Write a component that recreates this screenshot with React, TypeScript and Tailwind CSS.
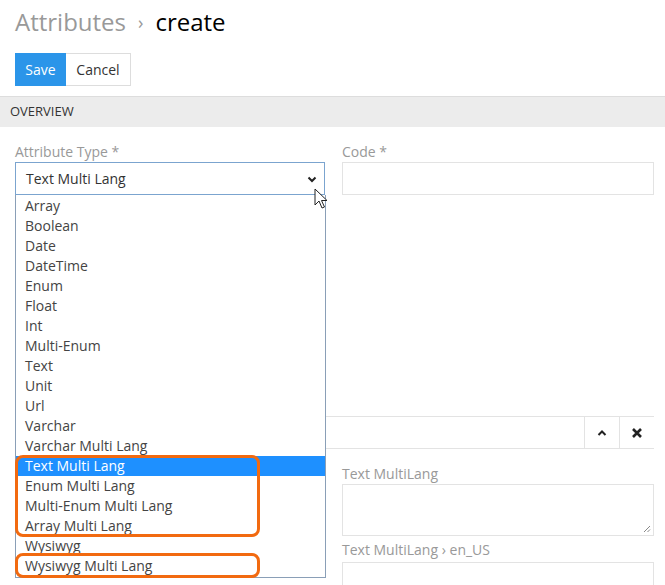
import React from "react";

const options = [
  "Array",
  "Boolean",
  "Date",
  "DateTime",
  "Enum",
  "Float",
  "Int",
  "Multi-Enum",
  "Text",
  "Unit",
  "Url",
  "Varchar",
  "Varchar Multi Lang",
  "Text Multi Lang",
  "Enum Multi Lang",
  "Multi-Enum Multi Lang",
  "Array Multi Lang",
  "Wysiwyg",
  "Wysiwyg Multi Lang",
];

const selected = "Text Multi Lang";

function Label({ children }: { children: React.ReactNode }) {
  return <div className="h-[20px] text-[14px] leading-[20px] text-[#999]">{children}</div>;
}

export default function App() {
  return (
    <div className="relative h-[585px] w-[665px] overflow-hidden bg-white font-['Open_Sans',sans-serif] text-[#333]">
      {/* Header */}
      <div className="flex h-[44px] items-center px-[15px] text-[24px] leading-none">
        <span className="text-[#999]">Attributes</span>
        <span className="mx-[12px] text-[18px] text-[#999]">›</span>
        <span className="text-black">create</span>
      </div>
      <div className="flex px-[15px] pt-[9px]">
        <button className="h-[33px] w-[51px] bg-[#2b95e9] text-[14px] text-white">Save</button>
        <button className="h-[33px] w-[65px] border border-l-0 border-[#ddd] bg-white text-[14px] text-[#333]">
          Cancel
        </button>
      </div>

      {/* Overview panel */}
      <div className="mt-[10px] flex h-[31px] items-center border-t border-[#ddd] bg-[#ececec] px-[10px] text-[13px] text-[#333]">
        OVERVIEW
      </div>

      <div className="grid grid-cols-[310px_312px] gap-x-[17px] px-[15px] pt-[15px]">
        <div>
          <Label>Attribute Type *</Label>
          <div className="flex h-[33px] items-center justify-between border border-[#7ba4cf] pl-[10px] pr-[6px] text-[14px]">
            <span>Text Multi Lang</span>
            <svg width="10" height="8" viewBox="0 0 10 8" className="mr-[1px]">
              <path d="M1.5 2.5 L5 6 L8.5 2.5" fill="none" stroke="#222" strokeWidth="2" />
            </svg>
          </div>
        </div>
        <div>
          <Label>Code *</Label>
          <div className="h-[33px] border border-[#e3e3e3]" />
        </div>
      </div>

      {/* Section panel with controls */}
      <div className="ml-[15px] mr-[11px] mt-[221px] flex h-[33px] items-stretch justify-end border-y border-[#e3e3e3]">
        <button className="flex w-[35px] items-center justify-center border-l border-[#e3e3e3]">
          <svg width="10" height="8" viewBox="0 0 10 8">
            <path d="M1.5 6 L5 2.5 L8.5 6" fill="none" stroke="#222" strokeWidth="2" />
          </svg>
        </button>
        <button className="flex w-[35px] items-center justify-center border-l border-[#e3e3e3]">
          <svg width="12" height="12" viewBox="0 0 12 12">
            <path d="M2 2 L10 10 M10 2 L2 10" fill="none" stroke="#222" strokeWidth="2.6" />
          </svg>
        </button>
      </div>

      <div className="ml-[342px] w-[312px] pt-[15px]">
        <Label>Text MultiLang</Label>
        <div className="relative h-[52px] border border-[#e3e3e3]">
          <svg width="8" height="8" viewBox="0 0 8 8" className="absolute bottom-[2px] right-[2px]">
            <path d="M7 1 L1 7 M7 4.5 L4.5 7" stroke="#888" strokeWidth="1" />
          </svg>
        </div>
        <div className="mt-[4px]">
          <Label>Text MultiLang › en_US</Label>
        </div>
        <div className="mt-[2px] h-[33px] border border-[#e3e3e3]" />
      </div>

      {/* Open dropdown list */}
      <div className="absolute left-[15px] top-[195px] w-[311px] border border-t-0 border-[#8a9fb7] bg-white py-[1px]">
        {options.map((o) => (
          <div
            key={o}
            className={`h-[20px] pl-[9px] text-[14px] leading-[20px] ${
              o === selected ? "bg-[#1e90ff] text-white" : "text-[#444]"
            }`}
          >
            {o}
          </div>
        ))}
      </div>

      {/* Annotation outlines */}
      <div className="absolute left-[15px] top-[455px] h-[82px] w-[245px] rounded-[8px] border-[3px] border-[#f26a10]" />
      <div className="absolute left-[15px] top-[553px] h-[25px] w-[245px] rounded-[8px] border-[3px] border-[#f26a10]" />

      {/* Mouse cursor */}
      <svg width="14" height="22" viewBox="0 0 14 22" className="absolute left-[314px] top-[188px]">
        <path d="M1 1 L1 17 L5 13 L8 20 L10.5 19 L7.5 12.5 L13 12.5 Z" fill="#fff" stroke="#222" strokeWidth="1" />
      </svg>
    </div>
  );
}
